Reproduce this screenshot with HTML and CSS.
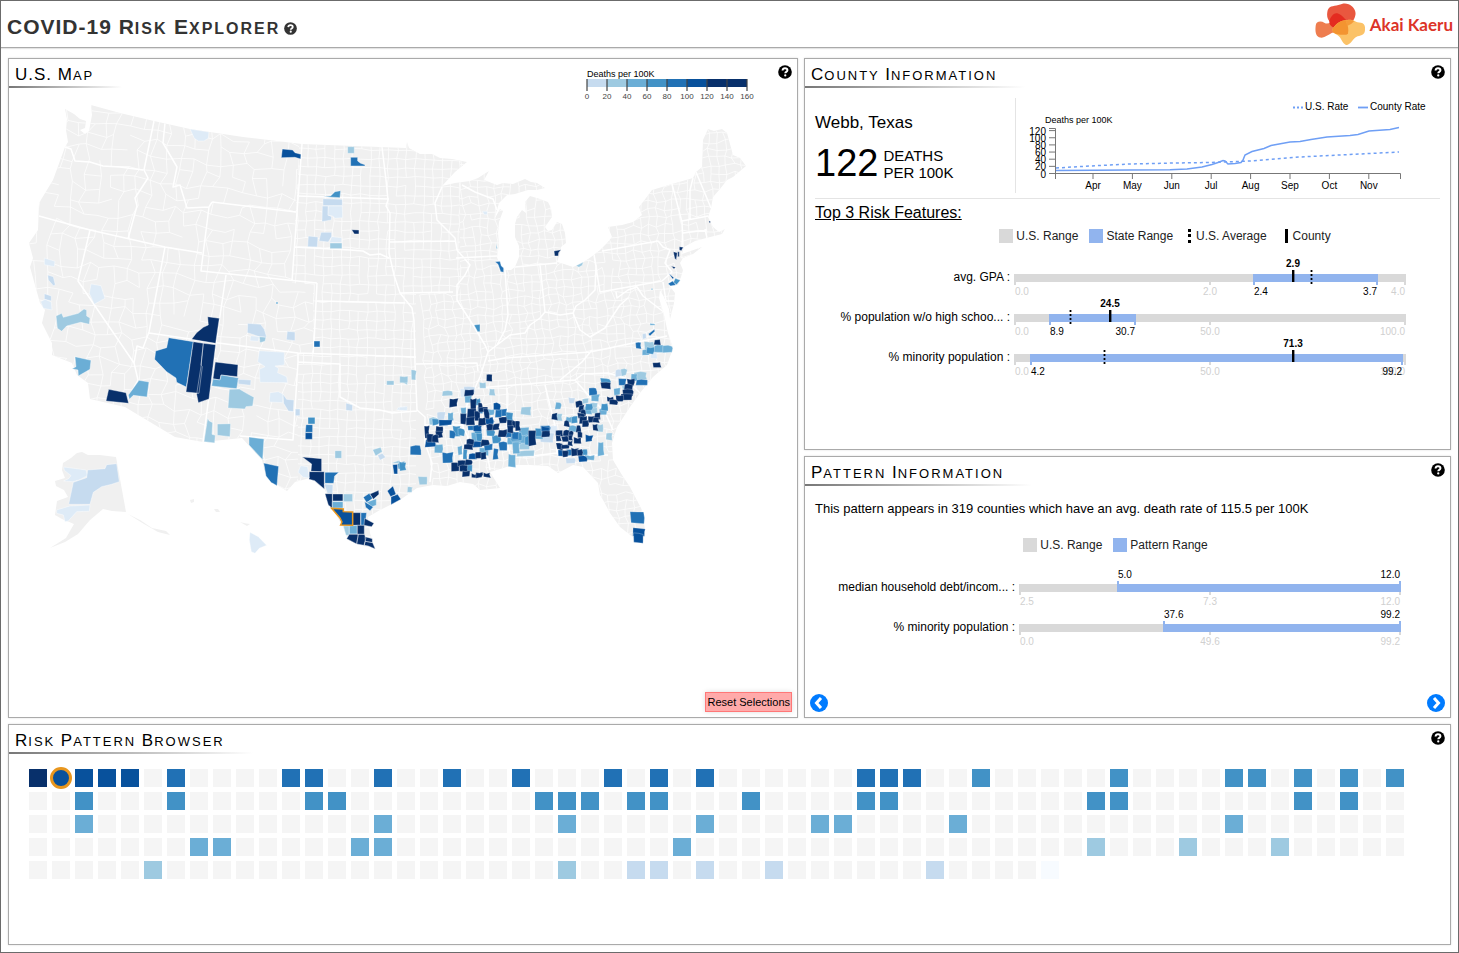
FILE: index.html
```html
<!DOCTYPE html>
<html lang="en">
<head>
<meta charset="utf-8">
<title>COVID-19 Risk Explorer</title>
<link rel="stylesheet" href="styles.css">
</head>
<body>
<svg class="defs" width="0" height="0" aria-hidden="true">
  <symbol id="help" viewBox="0 0 16 16"><circle cx="8" cy="8" r="7.8" fill="currentColor"/><path d="M5.200 6.300C5.400 4.500 6.600 3.800 8 3.800c1.500 0 2.800.8 2.800 2.300 0 1.700-2.500 1.800-2.500 3.300" fill="none" stroke="#fff" stroke-width="2.200"/><circle cx="8.300" cy="11.900" r="1.300" fill="#fff"/></symbol>
</svg>

<header class="topbar">
  <h1><span class="cap">COVID-19 R</span>isk <span class="cap">E</span>xplorer</h1>
  <button class="help help-title" aria-label="About this page"><svg><use href="#help"/></svg></button>
  <a class="brand" href="#">
    <svg class="brand-mark" viewBox="0 0 150 126" aria-hidden="true">
      <path d="M2 68C3 55 17 52 29 60C40 66 50 54 67 58L98 70Q104 90 91 95C75 99 59 86 50 90C40 96 31 102 20 104C6 104-1 94 2 68Z" fill="#ee7d4f"/>
      <path d="M37 27C39 8 55 10 70 6C83 2 89-1 101 4C116 11 124 24 121 37C119 54 100 70 80 75C66 77 57 68 48 60C37 49 35 40 37 27Z" fill="#e9573f"/>
      <path d="M50 40C61 24 74 29 94 52L78 62 60 76C43 69 37 57 50 40Z" fill="#e42b20"/>
      <path d="M53 77C63 63 77 51 97 51C113 47 119 58 138 59C150 61 152 73 149 87C146 99 129 97 120 104C112 111 104 127 93 126C80 120 81 105 67 96C59 92 51 88 53 77Z" fill="#fbc267"/>
      <path d="M53 77C63 63 77 51 92 52Q103 74 99 92Q92 99 61 92 50 87 53 77Z" fill="#f39430"/>
      <path d="M92 52Q111 49 118 54Q108 66 96 69Z" fill="#f59b39"/>
    </svg>
    <span>Akai Kaeru</span>
  </a>
</header>

<main class="board">
  <section class="panel map-panel">
    <svg class="map" id="map" viewBox="9 59 788 658" role="img" aria-label="U.S. map of deaths per 100K by county">
      <defs>
        <path id="land" d="M65 109L74 114 80 119 86 121 85 128 80 130 85 134 89 131 92 115 91 105 120 113 154 121 190 129 243 137 302 144 380 147 406 148 407 142 409 148 420 154 432 154 440 158 452 159 467 162 455 172 442 186 455 183 470 181 478 178 489 171 484 180 497 185 503 183 513 184 525 179 531 182 537 183 545 188 537 190 528 190 515 194 507 195 499 203 494 220 500 209 503 211 499 222 498 233 499 245 497 257 500 266 505 270 511 270 515 267 519 257 519 246 515 237 515 224 517 217 522 210 526 213 525 202 530 196 540 199 548 202 551 208 552 217 545 227 548 231 552 230 557 222 562 224 565 233 566 243 561 247 560 253 557 262 564 264 573 267 582 263 591 257 600 250 607 243 612 237 608 227 622 225 633 222 642 215 639 207 646 198 652 190 672 184 693 178 696 172 702 167 703 140 708 129 714 131 722 129 727 133 733 155 740 158 746 166 733 177 727 180 720 189 713 197 711 208 708 217 713 227 719 232 725 229 722 234 710 237 695 241 684 247 682 254 702 247 693 254 683 258 680 263 683 270 681 277 678 285 671 280 668 284 675 293 674 303 670 319 669 309 664 297 660 290 659 298 664 315 668 333 673 348 667 365 653 377 640 393 630 407 617 427 612 443 613 460 622 475 630 487 642 510 645 530 642 542 634 538 620 527 610 513 603 500 600 495 598 483 583 467 573 465 558 473 548 466 530 465 513 465 490 472 500 488 480 490 473 484 460 482 447 486 433 485 417 488 400 500 380 510 368 517 370 533 375 548 363 546 348 540 343 527 332 508 325 490 310 478 295 482 287 491 277 485 265 473 262 460 252 449 242 438 203 442 175 437 125 407 90 399 88 383 77 375 72 363 52 355 52 343 42 323 45 310 40 303 30 267 33 258 29 243 38 230 39 203 53 180 65 147 68 142 66 130 67 119Z"/>
        <clipPath id="land-clip"><use href="#land"/></clipPath>
        <clipPath id="west"><path d="M0 90H302L292 283 313 285V354H298V600H0Z"/></clipPath>
        <clipPath id="plains"><path d="M302 90H460V293H416V600H298V354H313V285L292 283Z"/></clipPath>
        <clipPath id="east"><path d="M460 90H797V600H416V293H460Z"/></clipPath>
      </defs>
      <use href="#land" fill="#f0f0f0"/>
      <g fill="#f0f0f0"><path d="M63 463L71 458 77 453 82 452 88 455 100 455 116 457 126 512 112 511 103 509 90 520 78 534 65 542 50 548 66 538 74 524 62 519 55 515 57 501 68 497 64 490 56 486 55 481 65 478 62 470ZM128 514l12 6 12 8 14 3 4 4-12-3-14-8ZM190 500l4-1 0 3-3 1ZM214 509l4 0 2 3-4 0ZM240 522l8 2-1 2ZM243 523l7 1-3 2Z"/></g>
      <g clip-path="url(#land-clip)" fill="none" stroke="#fff">
        <g id="mesh" stroke-width=".7"></g>
        <path stroke-width="1.500" stroke-linejoin="round" d="M65 147L71 149 75 161 90 162 103 166 120 167 143 170M154 121L144 170 148 178 135 198 137 206 128 239M39 216L90 230 165 247 202 253M90 230L78 281 134 363 138 380 127 400M165 247L149 332 143 348 137 346 134 363M165 123L163 143 177 167 173 187 180 185 187 208 209 207M212 202L296 212M212 202L209 207 201 271 317 283M226 275L216 343M149 333L218 343 298 353 416 357M302 144L292 281M297 196L389 199M294 247L350 250 363 251 370 255 380 254 389 258M382 147L386 180 388 200 386 206 390 213 389 253 394 275 400 293 412 308 414 320 415 363 417 410 425 417V443L432 463 430 482M390 242L456 241M400 293L453 292M442 187L435 203 437 220 455 238 457 250 470 265 465 275 457 285 457 300 473 325 485 345 488 352 480 377 467 405 463 427 468 437 460 458 488 458 490 470M456 258L497 256M505 270L508 315 505 330 497 345 488 352M540 265L545 312M515 267L557 263M497 345L510 335 525 333 530 325 540 318 545 312 560 315 573 313 576 306 585 300 595 290 596 265M594 255L600 292 662 281M602 251L658 241 663 247 670 250 665 263 672 272 662 281M573 313L580 330 590 337 605 328 610 320 620 305 628 298M616 292L617 298 628 290 637 287 643 296 652 303 665 313M488 361L505 358 590 352 667 336M478 388L575 380 583 374 608 373 625 378 645 398M592 350L582 362 560 380M416 364L477 363 478 371M425 425L463 425M507 388L507 440 512 465M545 385L556 430 557 453M523 457L557 453 560 456 608 455M575 380L590 397 605 412 613 430M317 283L314 343 313 354M317 301L405 303M298 353V362L340 364V397L360 408 380 410 392 413 417 411M298 362L293 440 240 436M216 343L203 442M672 184L682 222 683 247M693 178L690 190 690 219M682 221L708 216M683 233L707 230M705 229L707 238M696 172L711 208M462 185L475 192 493 199 497 210M663 282L666 301 674 301"/>
      </g>
      <g id="counties" stroke="#fff"></g>
      <g transform="translate(10 300) scale(.3333)">
        <path d="M965 625L1000 627 1000 635 1028 636 1028 676 992 675 996 666 990 654Z" fill="#08519c" stroke="#e8961e" stroke-width="4.500"/>
      </g>
      <g class="map-legend">
        <text x="587" y="77">Deaths per 100K</text>
        <g id="scale"></g>
      </g>
    </svg>
    <div class="panel-head">
      <h2><span class="cap">U.S. M</span>ap</h2>
      <button class="help" aria-label="Map help"><svg><use href="#help"/></svg></button>
    </div>
    <button class="reset">Reset Selections</button>
  </section>

  <section class="panel county-panel">
    <div class="panel-head">
      <h2><span class="cap">C</span>ounty <span class="cap">I</span>nformation</h2>
      <button class="help" aria-label="County help"><svg><use href="#help"/></svg></button>
    </div>
    <div class="summary">
      <div class="place">
        <div class="place-name">Webb, Texas</div>
        <div class="rate"><span class="rate-value">122</span><span class="rate-unit">DEATHS<br>PER 100K</span></div>
      </div>
      <svg class="trend" viewBox="1016 98 424 95" role="img" aria-label="Deaths per 100K over time">
        <g stroke="#6f9ff5" stroke-width="1.800"><path d="M1293 107.500H1304" stroke-dasharray="2 2"/><path d="M1358 107.500H1368"/></g>
        <text x="1305" y="110">U.S. Rate</text><text x="1370" y="110">County Rate</text>
        <text class="trend-title" x="1045" y="123">Deaths per 100K</text>
        <path d="M1049 128.500H1055.500V179M1055.500 173.500H1400.500V179" fill="none" stroke="#777"/>
        <g id="trend-axis"></g>
        <path d="M1056 168L1090 166 1130 164 1175 163 1210 162.500 1250 161 1300 157 1350 154.500 1399 152" fill="none" stroke="#6f9ff5" stroke-width="1.500" stroke-dasharray="3 3"/>
        <path d="M1056 170.500L1130 170 1170 169.800 1187 169 1202 167 1212 164.500 1218 162.500 1223 160.500 1225 161 1228 164 1235 163.500 1241 162.500 1243 160 1245 155 1252 151.500 1264 148.500 1271 145.500 1290 142 1300 141.500 1311 139.500 1327 137 1350 135.500 1358 134.500 1369 131 1390 129.500 1399 127.500" fill="none" stroke="#6f9ff5" stroke-width="1.500"/>
      </svg>
    </div>
    <h3>Top 3 Risk Features:</h3>
    <div class="legend">
      <span><i class="swatch us"></i>U.S. Range</span>
      <span><i class="swatch sel"></i>State Range</span>
      <span class="line-key"><i class="bar dotted"></i>U.S. Average</span>
      <span class="line-key"><i class="bar"></i>County</span>
    </div>
    <svg class="ranges" id="county-ranges" viewBox="805 254 645 126"></svg>
  </section>

  <section class="panel pattern-panel">
    <div class="panel-head">
      <h2><span class="cap">P</span>attern <span class="cap">I</span>nformation</h2>
      <button class="help" aria-label="Pattern help"><svg><use href="#help"/></svg></button>
    </div>
    <p class="pattern-text">This pattern appears in 319 counties which have an avg. death rate of 115.5 per 100K</p>
    <div class="legend">
      <span><i class="swatch us"></i>U.S. Range</span>
      <span><i class="swatch sel"></i>Pattern Range</span>
    </div>
    <svg class="ranges" id="pattern-ranges" viewBox="805 564 645 90"></svg>
    <div class="pager">
      <button aria-label="Previous pattern"><svg viewBox="0 0 18 18"><circle cx="9" cy="9" r="9" fill="#007bff"/><path d="M11 4L6.500 9 11 14" fill="none" stroke="#fff" stroke-width="3"/></svg></button>
      <button aria-label="Next pattern"><svg viewBox="0 0 18 18"><circle cx="9" cy="9" r="9" fill="#007bff"/><path d="M7 4L11.500 9 7 14" fill="none" stroke="#fff" stroke-width="3"/></svg></button>
    </div>
  </section>

  <section class="panel browser-panel">
    <div class="panel-head">
      <h2><span class="cap">R</span>isk <span class="cap">P</span>attern <span class="cap">B</span>rowser</h2>
      <button class="help" aria-label="Browser help"><svg><use href="#help"/></svg></button>
    </div>
    <div class="cells" id="cells"></div>
  </section>
</main>
<script src="app.js"></script>
</body>
</html>
```

FILE: styles.css
```css
* { box-sizing: border-box; }
html { height: 100%; }
body {
  margin: 0;
  min-height: 100%;
  display: flex;
  flex-direction: column;
  border: 1px solid #6b6b6b;
  background: #fff;
  color: #000;
  font-family: "Liberation Sans", Arial, sans-serif;
  font-size: 12px;
}
h1, h2, h3, p { margin: 0; font-weight: normal; }
button { border: 0; padding: 0; background: none; font: inherit; color: inherit; cursor: pointer; }
svg { display: block; }
.defs { position: absolute; }

.topbar {
  display: flex;
  align-items: center;
  height: 47px;
  padding: 0 5px 0 6px;
  border-bottom: 1px solid #aaa;
  box-shadow: 0 1px 1px #e4e4e4;
}
h1 {
  color: #333;
  font-size: 16px;
  font-weight: bold;
  text-transform: uppercase;
  letter-spacing: 2px;
  padding-top: 5px;
}
h1 .cap { font-size: 21px; letter-spacing: 1px; }
.help { width: 14px; height: 14px; }
.help svg { width: 14px; height: 14px; }
.help-title { margin: 8px 0 0 4px; color: #333; }
.help-title, .help-title svg { width: 13px; height: 13px; }
.brand {
  display: flex;
  align-items: center;
  gap: 5px;
  margin-left: auto;
  color: #dc3428;
  font: bold 17px Lato, sans-serif;
  text-decoration: none;
}
.brand-mark { width: 50px; height: 42px; }

.board {
  flex: 1;
  display: grid;
  grid-template-columns: 790fr 647fr;
  grid-template-rows: 392fr 262fr 221fr;
  gap: 6px;
  padding: 10px 7px 7px;
}
.panel {
  display: flex;
  flex-direction: column;
  min-width: 0;
  border: 1px solid #aaa;
  box-shadow: 0 0 2px #ddd;
}
.panel-head {
  display: flex;
  justify-content: space-between;
  align-items: flex-start;
}
.panel-head .help { margin: 6px 5px 0 0; }
h2 {
  height: 29px;
  padding: 6px 28px 0 6px;
  font-size: 13px;
  line-height: 20px;
  text-transform: uppercase;
  letter-spacing: 2px;
  background: linear-gradient(90deg, #777, #fff) bottom / 100% 2px no-repeat;
}
h2 .cap { font-size: 17px; letter-spacing: 1px; }

.map-panel { display: grid; grid-row: 1 / 3; }
.map-panel > * { grid-area: 1 / 1; }
.map-panel .panel-head { align-self: start; }
.map { width: 100%; height: 100%; }
.map-legend { font-size: 9px; }
.map-legend .tick { font-size: 8px; fill: #444; text-anchor: middle; }
.reset {
  place-self: end;
  margin: 5px;
  padding: 2px 1px;
  border: 1px solid #f77;
  background: #faa;
  font-size: 11px;
  line-height: 14px;
  box-shadow: 0 0 5px #ddd;
}

.summary {
  display: grid;
  grid-template-columns: 201fr 424fr;
  margin: 10px 10px 0;
  padding-bottom: 5px;
  border-bottom: 1px solid #e4e4e4;
}
.place { border-right: 1px solid #e4e4e4; padding-top: 15px; }
.place-name { font-size: 17px; line-height: 20px; }
.rate { display: flex; align-items: center; gap: 5px; margin-top: 10px; }
.rate-value { font-size: 38px; line-height: 40px; }
.rate-unit { font-size: 15px; line-height: 17px; padding-top: 2px; }
.trend { width: 100%; font-size: 10px; }
.trend-title { font-size: 9px; }
h3 { margin: 5px 10px 0; font-size: 16px; line-height: 18px; text-decoration: underline; }
.legend { display: flex; justify-content: center; gap: 11px; margin-top: 6px; line-height: 16px; color: #222; }
.county-panel .legend { padding-left: 75px; }
.legend span { display: flex; align-items: center; gap: 3px; }
.swatch { width: 14px; height: 14px; }
.swatch.us { background: #d9d9d9; }
.swatch.sel { background: #91b4ee; }
.legend .line-key { gap: 5px; padding-left: 4px; }
.legend .line-key + .line-key { padding-left: 7px; }
.bar { height: 14px; border-left: 3px solid #000; }
.bar.dotted { border-left: 3px dotted #000; }
.ranges { width: 100%; margin-top: 10px; font-size: 10px; }
.ranges .name { font-size: 12px; text-anchor: end; }
.ranges .muted { fill: #d0d0d0; }
.ranges .strong { font-weight: bold; }

.pattern-text { margin: 14px 10px 0; font-size: 13px; line-height: 18px; }
.pattern-panel .legend { margin-top: 19px; padding-right: 24px; }
.pattern-panel .ranges { margin-top: 11px; }
.pager { display: flex; justify-content: space-between; margin: auto 5px 5px; }
.pager svg { width: 18px; height: 18px; }

.browser-panel { grid-column: 1 / 3; }
.cells {
  display: grid;
  grid-template-columns: repeat(60, 18px);
  gap: 5px;
  padding: 15px 20px;
}
.cell { height: 18px; background: #f5f5f5; }
.c0 { background: #f7fbff; }
.c1 { background: #c6dbef; }
.c2 { background: #9ecae1; }
.c3 { background: #6baed6; }
.c4 { background: #4292c6; }
.c5 { background: #2171b5; }
.c6 { background: #08519c; }
.c7 { background: #08306b; }
.cell.active { border-radius: 50%; outline: 3px solid #e8961e; outline-offset: -1px; }
```

FILE: app.js
```js
const COLORS = ['#deebf7', '#c6dbef', '#9ecae1', '#6baed6', '#4292c6', '#2171b5', '#08519c', '#08306b'];
const el = id => document.getElementById(id);
let seed = 7;
const rnd = () => (seed = (seed * 16807) % 2147483647) / 2147483647;

/* County boundary mesh: one jittered lattice per region, with its own cell size. */
function mesh(clip, x0, y0, x1, y1, size, jitter, drop, tilt) {
  const cols = Math.ceil((x1 - x0) / size), rows = Math.ceil((y1 - y0) / size);
  const p = [];
  for (let r = 0; r <= rows; r++) {
    p.push([]);
    for (let c = 0; c <= cols; c++) {
      p[r].push([x0 + c * size + (rnd() - .5) * jitter - r * size * tilt, y0 + r * size + (rnd() - .5) * jitter + c * size * tilt]);
    }
  }
  const f = a => a.map(v => v.toFixed(1)).join(' ');
  let d = '';
  for (let r = 0; r < rows; r++) for (let c = 0; c < cols; c++) {
    if (rnd() > drop) d += 'M' + f(p[r][c]) + 'L' + f(p[r][c + 1]);
    if (rnd() > drop) d += 'M' + f(p[r][c]) + 'L' + f(p[r + 1][c]);
  }
  return `<g clip-path="url(#${clip})"><path d="${d}"/></g>`;
}
el('mesh').innerHTML =
  mesh('west', 20, 60, 400, 480, 13, 8, .22, .12) +
  mesh('plains', 290, 130, 480, 560, 9, 2, .08, .02) +
  mesh('east', 410, 120, 840, 620, 8, 4, .08, -.06);

/* Larger counties as outlines. */
const SHAPES = [
  [10, 90, [
    [0, 'M540 117L597 126 595 145 582 153 565 153 553 145Z'],
    [6, 'M817 177L848 180 855 188 873 193 872 207 855 202 814 203Z'],
    [2, 'M1013 170H1033V190H1013Z'], [5, 'M1022 202H1043V213L1052 220 1065 224V228H1022Z'],
    [4, 'M940 320L962 318 975 305 992 302 990 323Z'],
    [1, 'M939 326L997 328V347H939ZM937 348H955V375L965 380 964 390 936 395Z'],
    [0, 'M955 348H997L998 383 975 385 968 378 954 376Z'],
    [7, 'M1025 419L1047 420V432L1033 432Z'],
    [1, 'M895 438L924 441 922 471 893 470ZM933 427H965V440L955 456 927 453Z'],
    [0, 'M965 440L995 443V458H958Z'], [2, 'M960 459H996V476H960Z'],
    [0, 'M103 504L135 514 133 530 103 524Z'], [1, 'M113 555L130 560 136 585 130 587 115 570ZM103 611L124 618V633L103 628Z'],
    [0, 'M92 635L105 628 124 636 126 660 100 655ZM243 582L273 587 285 625 253 643 238 610Z'],
    [2, 'M138 678L155 670 160 682 205 670 222 657 230 660 230 678 240 684 238 703 212 697 170 708 155 724 142 715Z'],
    [3, 'M798 636H804V642H798Z']
  ]],
  [10, 300, [
    [7, 'M593 50L628 55 617 130 545 118 560 98 580 82 595 75Z'],
    [5, 'M476 113L550 125 529 261 500 247 498 234 470 215 434 178 437 153 470 143Z'],
    [7, 'M550 125L580 130 573 195 577 200 567 280 528 276ZM580 130L617 134 597 297 565 308 560 283 573 200Z'],
    [7, 'M616 186L684 194 682 230 633 225 630 240 609 236Z'],
    [3, 'M609 237L630 240 634 225 686 234 680 266 605 258Z'], [1, 'M684 238L723 240 722 256 685 252Z'],
    [2, 'M658 268L688 267 710 280 732 292 728 318 708 320 705 327 654 324Z'],
    [1, 'M713 70L752 73 763 88 770 112 748 110 712 98Z'], [0, 'M722 107L748 110 745 124 720 122Z'], [2, 'M748 110L768 112 765 124 750 128Z'],
    [1, 'M832 94L855 96V122L829 119Z'], [5, 'M912 123H930V141H912Z'],
    [0, 'M748 152L823 157V195L795 198 806 205 803 218 830 230 833 248 750 247 748 208 765 200 743 185Z'],
    [0, 'M780 278L805 275 820 283 818 308 778 306Z'], [1, 'M819 282L830 298 852 300 850 335 835 333 821 310ZM856 327H870V347H856Z'],
    [3, 'M195 170L243 181 240 208 205 228 204 210 186 206 198 200Z'],
    [7, 'M296 268L348 278 356 310 288 303Z'], [3, 'M387 241L417 246 411 291 370 286 358 298 355 285 370 265Z'],
    [2, 'M593 354L597 362 608 368 606 403 616 406 614 429 582 425ZM622 372L662 371 660 410 622 406Z'],
    [4, 'M894 352H915V372H894Z'], [5, 'M888 374H908V397H886Z'], [6, 'M886 398H907V418H886Z'],
    [1, 'M1008 309L1028 315 1027 333 1008 331Z'], [0, 'M1165 322L1190 319V330H1160Z'],
    [3, 'M717 411L762 417 758 479 717 435Z'], [5, 'M761 489L806 499 801 557 783 547 768 528Z'],
    [2, 'M975 452H995V475H975ZM1130 242H1152V255H1130ZM1170 232H1192V255L1180 248Z'],
    [7, 'M877 471L935 476V515L903 514 905 492ZM898 515H943V567L914 542 897 538Z'],
    [0, 'M872 497L893 500 898 534 880 532 864 517Z'], [5, 'M945 517H987L974 528 971 550H945Z'], [1, 'M943 552L969 554 968 580H952Z'],
    [7, 'M945 581H967V625L955 615ZM968 582H999V603H968Z'], [2, 'M1000 582H1028V605H1000Z'], [3, 'M967 605H999V624H967Z'],
    [7, 'M1028 638H1052V676H1028Z'], [5, 'M1053 638H1070L1065 676H1053Z'], [7, 'M1064 655L1092 670 1085 680 1062 676Z'],
    [2, 'M1000 678H1018V706H1008Z'], [3, 'M1018 678L1042 676V702H1018Z'],
    [7, 'M1042 676H1063V703H1042ZM1018 703H1045L1040 732 1010 716ZM1045 703H1063L1068 714 1062 736 1040 732ZM1065 710L1087 716V728L1066 724ZM1066 724L1088 728 1096 747 1075 738 1063 736Z'],
    [2, 'M1088 449L1112 442 1117 455 1097 468Z'], [1, 'M1103 466L1117 460 1127 472 1110 481Z'],
    [4, 'M1163 490L1184 484V507L1165 507Z'], [6, 'M1148 494L1163 493V522H1152Z'], [2, 'M1147 488L1168 481V490H1148Z'],
    [5, 'M1060 592L1078 580 1088 595 1070 608Z'], [7, 'M1080 582L1106 571 1107 583 1090 598Z'],
    [3, 'M1070 607L1099 596V616L1085 620Z'], [5, 'M1064 605L1090 621 1080 632 1067 622Z'],
    [6, 'M1132 573L1149 558 1158 583 1142 590ZM1143 590L1163 583 1173 598 1143 614Z'],
    [0, 'M161 501L228 510 233 527 207 540 188 545 161 543 176 536 183 527 163 511Z'],
    [1, 'M233 510L285 506 290 494 320 491 328 545 305 553 275 560 250 577 240 613 176 613 190 547 230 533Z'],
    [0, 'M140 630L180 618 240 615 238 634 200 635 175 663 165 665 160 645 140 640ZM720 697L745 710 770 736 748 745 735 760 724 755 718 720Z']
  ]],
  [400, 60, [
    [5, 'M285 605L300 604 304 618 311 624V637L302 635 294 613Z'], [2, 'M288 550L293 566H288Z'], [0, 'M247 454H262V464H253Z'],
    [7, 'M462 573L483 569 476 578 475 588H464Z'], [2, 'M528 617L550 606 547 616 537 622Z'],
    [4, 'M222 795L240 793V815H233Z'], [7, 'M927 483H931V488H927ZM838 560L850 562 844 572 838 570ZM820 575L832 578 829 600 824 595Z'],
    [7, 'M833 575H838V590H833ZM813 618L827 622 822 627Z'], [4, 'M826 655L841 661 830 674 820 668Z'],
    [5, 'M804 671L818 663 828 675 812 678Z'], [6, 'M806 640L822 653 818 657Z'], [2, 'M753 685H759V690H753Z'],
    [5, 'M745 822L763 808 765 814 750 828Z'], [1, 'M727 822L738 820 739 835 728 838Z'], [3, 'M750 790L765 792V796H750Z']
  ]]
];

/* Small southern counties: x,y,w,h per colour. */
const SMALL = {
  0: '450,290,16,18 754,70,16,12 256,358,14,12 185,178,10,20 0,232,20,8',
  1: '195,172,26,12 113,248,18,18 422,312,36,22 500,384,22,12 648,122,16,14 508,204,12,12 130,278,12,8',
  2: '130,185,24,10 240,160,16,12 270,178,12,14 365,232,26,20 90,265,18,16 360,333,24,22 352,365,48,10 470,252,12,16 590,285,16,16 622,310,12,18 706,128,30,20 570,222,18,18 575,235,16,14 548,208,14,10 665,120,12,14 38,123,8,24 0,142,22,14 58,442,20,18 25,472,10,10 735,36,24,20 668,168,8,8',
  3: '198,195,14,18 184,235,12,16 145,250,12,20 105,345,20,22 175,350,10,22 218,308,24,24 360,295,24,26 325,325,34,14 340,340,16,26 328,375,16,34 362,318,18,18 404,312,22,12 468,220,12,14 595,340,14,34 555,232,16,16 600,238,16,12 695,132,14,18 728,60,18,12 765,48,20,16 790,50,24,14 508,290,20,12 500,262,14,14 555,378,26,8 575,195,20,14 645,178,14,14 242,358,20,14 266,240,12,12',
  4: '320,250,16,22 280,320,18,18 0,398,14,20 162,290,14,26 176,298,14,16 230,310,12,22 335,312,26,18 375,322,14,20 410,297,14,18 560,225,14,14 605,225,14,14 605,148,22,10 515,262,14,14 545,360,14,12 200,405,14,16 98,268,16,14 742,55,16,14 262,300,18,16 225,208,12,14 225,290,16,16 190,360,8,26',
  5: '298,240,18,16 287,240,14,18 33,350,26,20 128,370,28,24 320,300,12,20 299,338,18,20 282,358,9,28 694,548,36,28 570,178,16,14 710,150,28,14 150,305,12,16 340,308,14,16 425,290,22,10 660,150,16,12 711,38,8,14 205,288,16,12 265,270,12,8 503,360,14,14 235,235,10,12 255,346,20,12',
  6: '282,222,16,16 258,265,18,16 78,330,24,17 120,270,32,13 218,335,24,14 210,372,18,13 557,318,18,14 478,363,12,14 538,380,20,12 700,597,32,18 703,613,24,22 428,292,18,12 222,288,20,14',
  7: '260,135,15,16 195,183,22,11 150,207,20,20 213,208,12,30 205,238,22,25 225,245,14,24 200,264,20,18 185,252,10,28 235,222,10,15 240,235,22,9 254,240,10,22 237,266,18,18 262,285,16,14 280,284,15,14 300,263,16,15 298,301,18,16 75,290,10,32 83,316,14,16 108,290,18,16 110,306,15,14 98,318,14,16 200,330,18,14 195,345,22,11 245,333,20,11 322,272,16,18 338,276,10,14 346,275,12,24 322,290,16,15 388,304,17,40 428,304,20,14 230,370,12,14 244,370,12,14 158,400,18,22 176,395,20,12 198,392,16,10 180,408,20,14 190,425,16,12 217,434,12,8 232,430,12,10 252,431,16,8 457,252,12,14 493,275,12,12 530,215,14,14 538,228,12,16 545,242,10,14 535,252,14,12 540,262,16,14 550,272,14,16 568,262,16,12 585,252,12,14 580,265,14,10 580,284,10,16 470,302,14,13 492,303,14,11 508,306,9,9 530,290,10,15 533,308,10,14 470,318,10,12 488,322,14,10 505,318,10,9 524,325,18,11 472,342,12,14 485,345,18,9 505,335,10,10 518,358,14,16 533,360,12,14 490,363,12,14 605,158,24,16 685,150,14,16 675,165,20,16 670,180,26,14 663,193,30,14 650,200,16,12 622,203,14,10 632,210,18,12 765,30,14,10 760,98,20,12'
};
let out = SHAPES.map(([x, y, list]) =>
  `<g transform="translate(${x} ${y}) scale(.3333)" stroke-width="1.200">` +
  list.map(([c, d]) => `<path fill="${COLORS[c]}" d="${d}"/>`).join('') + '</g>').join('');
const j = () => (rnd() - .5) * 5;
out += '<g transform="translate(400 330) scale(.3333)" stroke-width=".8">';
for (const c in SMALL) {
  out += SMALL[c].split(' ').map(s => {
    const [x, y, w, h] = s.split(',').map(Number);
    const l = x - 2, t = y - 2, r = x + w + 3, b = y + h + 3;
    const d = [[l, t], [(l + r) / 2, t], [r, t], [r, (t + b) / 2], [r, b], [l, b]]
      .map(([px, py], i) => (i ? 'L' : 'M') + (px + j()).toFixed(1) + ' ' + (py + j()).toFixed(1)).join('');
    return `<path fill="${COLORS[c]}" d="${d}Z"/>`;
  }).join('');
}
el('counties').innerHTML = out + '</g>';

/* Map colour scale. */
el('scale').innerHTML = [1, 2, 3, 4, 5, 6, 7, 7].map((c, i) =>
  `<rect x="${587 + i * 20}" y="79" width="20" height="8" fill="${COLORS[c]}"/>`).join('') +
  [...Array(9).keys()].map(i => `<path d="M${587 + i * 20} 79V91" stroke="#444" stroke-opacity=".8" stroke-width="1.500"/><text class="tick" x="${587 + i * 20}" y="99">${i * 20}</text>`).join('');

/* Trend axes. */
el('trend-axis').innerHTML = [...Array(7).keys()].map(i => {
  const y = 173.5 - i * 7.15;
  return `<path d="M1049 ${y}H1055" stroke="#777"/><text x="1046" y="${y + 4}" text-anchor="end">${i * 20}</text>`;
}).join('') + ['Apr', 'May', 'Jun', 'Jul', 'Aug', 'Sep', 'Oct', 'Nov'].map((m, i) => {
  const x = 1093 + i * 39.4;
  return `<path d="M${x} 173V179" stroke="#777"/><text x="${x}" y="189" text-anchor="middle">${m}</text>`;
}).join('');

/* Range bars. */
const label = (x, y, t, anchor = 'start', cls = '') => `<text class="${cls}" x="${x}" y="${y}" text-anchor="${anchor}">${t}</text>`;
function range(o) {
  const { y, a, b, s, e } = o;
  let h = `<text class="name" x="${a - 4}" y="${y + 7}">${o.name} :</text>`;
  h += `<rect x="${a}" y="${y}" width="${b - a}" height="8" fill="#d9d9d9"/>`;
  h += [a, 1209, b - 2].map(x => `<rect x="${x}" y="${y + 8}" width="2" height="3" fill="#d9d9d9"/>`).join('');
  h += label(a + 1, y + 21, o.ticks[0], 'start', 'muted') + label(1210, y + 21, o.ticks[1], 'middle', 'muted') + label(b - 1, y + 21, o.ticks[2], 'end', 'muted');
  h += `<rect x="${s}" y="${y}" width="${e - s}" height="8" fill="#91b4ee"/>`;
  const ty = o.up ? y - 3 : y;
  h += [s, e - 2].map(x => `<rect x="${x}" y="${ty}" width="2" height="11" fill="#91b4ee"/>`).join('');
  const ly = o.up ? y - 6 : y + 21;
  h += label(s + 1, ly, o.from) + label(e - 1, ly, o.to, 'end');
  if (o.county) {
    h += `<path d="M${o.avg} ${y - 4}V${y + 10}" stroke="#000" stroke-width="1.800" stroke-dasharray="2 2"/>`;
    h += `<rect x="${o.county - 1}" y="${y - 4}" width="2.400" height="12"/>` + label(o.county, y - 7, o.value, 'middle', 'strong');
  }
  return h;
}
el('county-ranges').innerHTML = [
  { y: 274, a: 1014, b: 1406, s: 1253, e: 1378, name: 'avg. GPA', ticks: ['0.0', '2.0', '4.0'], from: '2.4', to: '3.7', county: 1293, avg: 1311.5, value: '2.9' },
  { y: 314, a: 1014, b: 1406, s: 1049, e: 1136, name: '% population w/o high schoo...', ticks: ['0.0', '50.0', '100.0'], from: '8.9', to: '30.7', county: 1110, avg: 1070.5, value: '24.5' },
  { y: 354, a: 1014, b: 1406, s: 1030, e: 1403, name: '% minority population', ticks: ['0.0', '50.0', '100.0'], from: '4.2', to: '99.2', county: 1293, avg: 1104.5, value: '71.3' }
].map(range).join('');
el('pattern-ranges').innerHTML = [
  { y: 584, a: 1019, b: 1401, s: 1117, e: 1401, up: true, name: 'median household debt/incom...', ticks: ['2.5', '7.3', '12.0'], from: '5.0', to: '12.0' },
  { y: 624, a: 1019, b: 1401, s: 1163, e: 1401, up: true, name: '% minority population', ticks: ['0.0', '49.6', '99.2'], from: '37.6', to: '99.2' }
].map(range).join('');

/* Pattern browser: column -> colour class for each row. */
const ROWS = [
  { 7: [0], 6: [1, 2, 3, 4], 5: [6, 11, 12, 15, 18, 21, 25, 27, 29, 36, 37, 38], 4: [41, 47, 52, 53, 55, 57, 59] },
  { 4: [2, 6, 12, 13, 22, 23, 24, 26, 27, 31, 36, 37, 46, 47, 55, 57] },
  { 3: [2, 15, 23, 29, 34, 35, 40, 52] },
  { 3: [7, 8, 14, 15, 28], 2: [46, 50, 54] },
  { 2: [5, 23], 1: [26, 27, 29, 32, 39], 0: [44] }
];
let n = 0;
ROWS.forEach((row, r) => {
  for (let c = 0; c < (r === 4 ? 45 : 60); c++) {
    const b = document.createElement('button');
    b.className = 'cell';
    for (const k in row) if (row[k].includes(c)) b.classList.add('c' + k);
    if (r === 0 && c === 1) b.classList.add('active');
    b.setAttribute('aria-label', 'Pattern ' + (++n));
    el('cells').append(b);
  }
});
```
